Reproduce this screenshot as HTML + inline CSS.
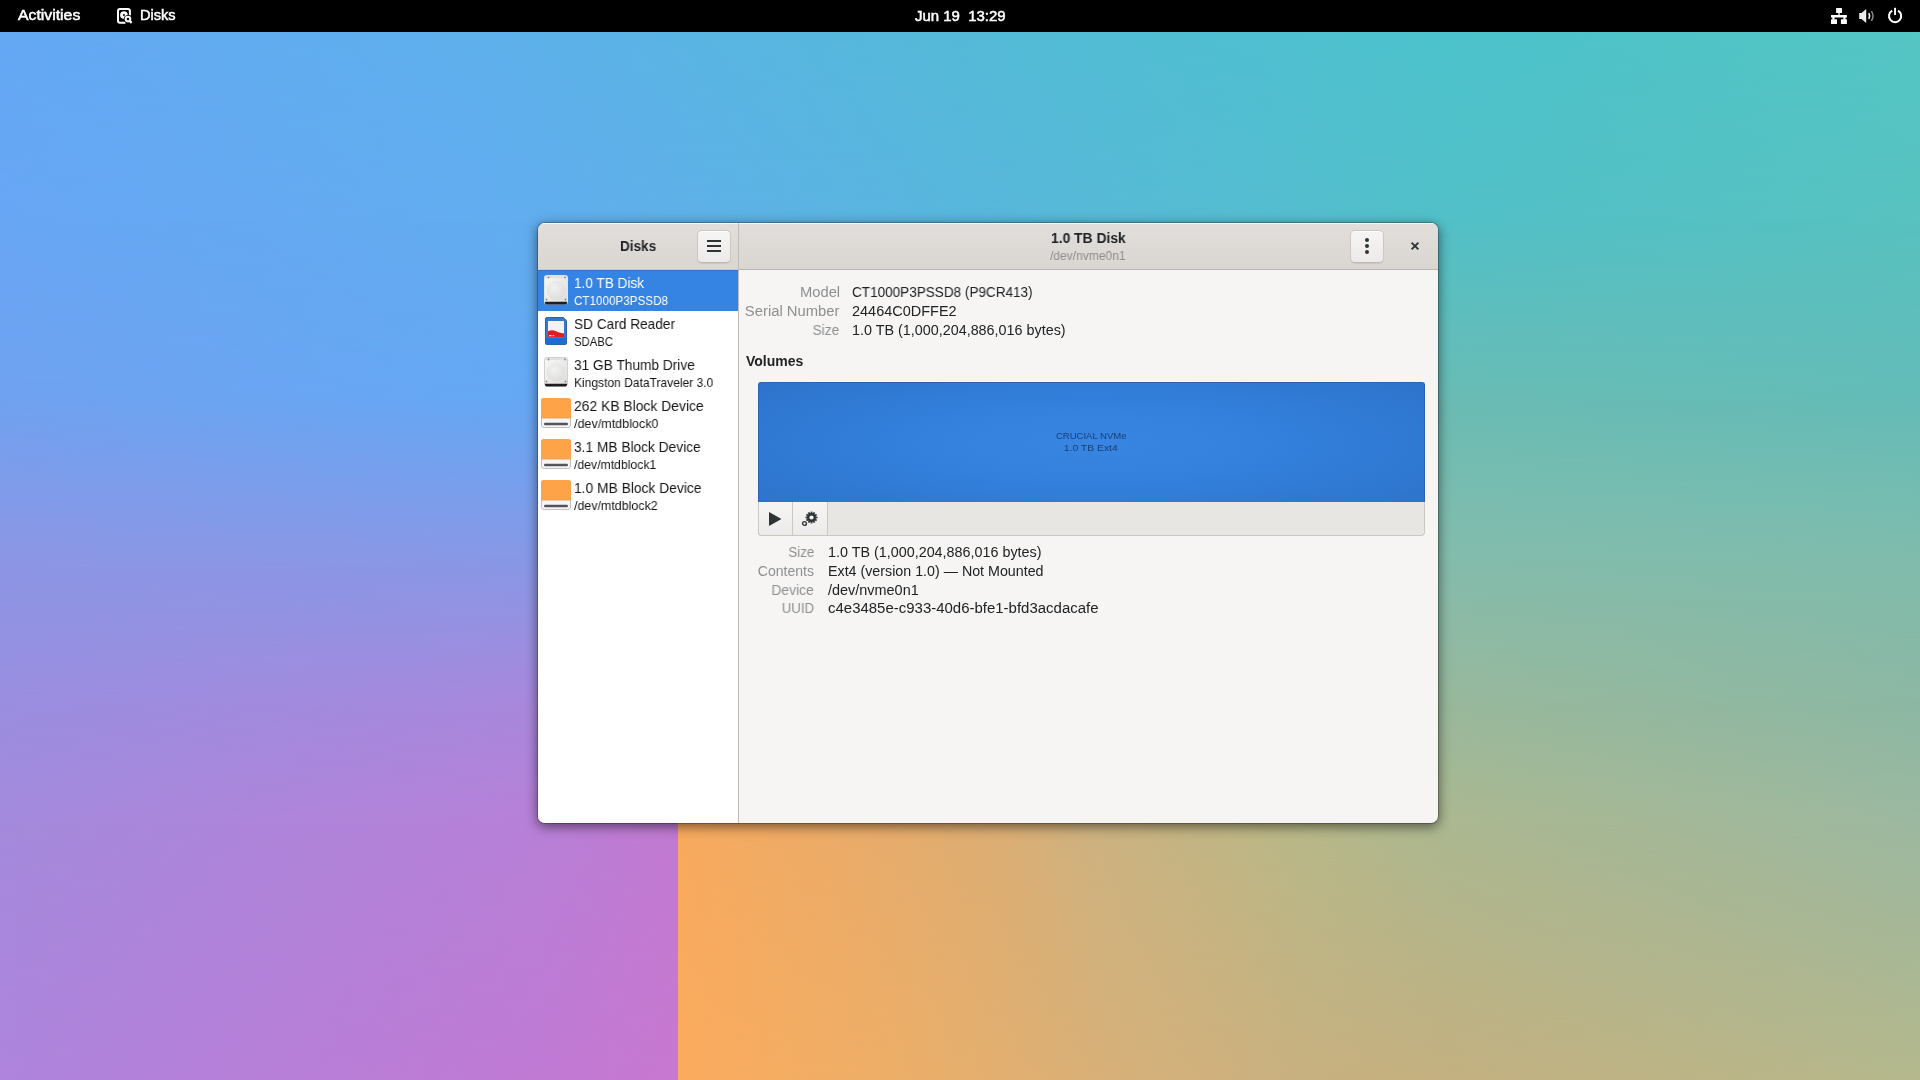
<!DOCTYPE html>
<html><head><meta charset="utf-8"><style>
html,body{margin:0;padding:0}
body{width:1920px;height:1080px;overflow:hidden;position:relative;font-family:"Liberation Sans",sans-serif;color:#2e3436;background:#62a8f2}
.abs{position:absolute}
.t{position:absolute;white-space:nowrap;line-height:1;will-change:transform}
.bgl{position:absolute;left:0;top:0;width:1920px;height:1080px}
#topbar{left:0;top:0;width:1920px;height:32px;background:#000}
#win{left:538px;top:223px;width:900px;height:600px;border-radius:7px 7px 7px 7px;overflow:hidden;background:#f6f5f4;
 box-shadow:0 0 0 1px rgba(0,0,0,0.23),0 3px 12px 1px rgba(0,0,0,0.5)}
.hdr{position:absolute;top:0;height:46px;background:linear-gradient(to top,#dad6d2,#e1dedb);border-bottom:1px solid #b9b5b1;box-shadow:inset 0 1px rgba(255,255,255,0.8)}
.btn{position:absolute;box-sizing:border-box;border:1px solid #cdc7c2;border-bottom-color:#bfb8b1;border-radius:5px;background:linear-gradient(to top,#edebe9 2px,#f6f5f4);box-shadow:inset 0 1px rgba(255,255,255,0.8),0 1px rgba(0,0,0,0.07)}
svg{position:absolute;overflow:visible}
</style></head><body>
<div class="bgl" style="background:linear-gradient(to right,#64a8f4 0px,#5eb0ec 480px,#54bad8 960px,#4cc2cc 1440px,#54c6c4 1920px);"></div>
<div class="bgl" style="background:linear-gradient(to right,#68a6f4 0px,#62acf0 480px,#58b6dc 960px,#52c0c8 1440px,#58c2c0 1920px);-webkit-mask-image:linear-gradient(to bottom,transparent 32px,#000 220px);mask-image:linear-gradient(to bottom,transparent 32px,#000 220px);"></div>
<div class="bgl" style="background:linear-gradient(to right,#70a2f0 0px,#64a8f4 538px,#5eb4d8 960px,#6abcb4 1440px,#64bcb8 1920px);-webkit-mask-image:linear-gradient(to bottom,transparent 220px,#000 400px);mask-image:linear-gradient(to bottom,transparent 220px,#000 400px);"></div>
<div class="bgl" style="background:linear-gradient(to right,#8c96e4 0px,#8898e6 538px,#80b0c0 960px,#84bcac 1440px,#80bcac 1920px);-webkit-mask-image:linear-gradient(to bottom,transparent 400px,#000 560px);mask-image:linear-gradient(to bottom,transparent 400px,#000 560px);"></div>
<div class="bgl" style="background:linear-gradient(to right,#9a8ee0 0px,#a888dc 538px,#a0a8b0 960px,#98b89c 1440px,#8cb8a4 1920px);-webkit-mask-image:linear-gradient(to bottom,transparent 560px,#000 700px);mask-image:linear-gradient(to bottom,transparent 560px,#000 700px);"></div>
<div class="bgl" style="background:linear-gradient(to right,#a48adc 0px,#b880d8 538px,#c27ad2 678px,#c0a890 960px,#acb890 1440px,#9cb8a0 1920px);-webkit-mask-image:linear-gradient(to bottom,transparent 700px,#000 823px);mask-image:linear-gradient(to bottom,transparent 700px,#000 823px);"></div>
<div class="bgl" style="background:linear-gradient(to right,#ae84dc 0px,#c07ad4 538px,#c878d0 678px,#d8b078 960px,#c4b080 1440px,#b4b88c 1920px);-webkit-mask-image:linear-gradient(to bottom,transparent 823px,#000 1080px);mask-image:linear-gradient(to bottom,transparent 823px,#000 1080px);"></div>
<div class="abs" style="left:678px;top:823px;width:1242px;height:257px;background:linear-gradient(to right,#f8aa5e 0px,#eaac6a 182px,#dcae74 322px,#ccb280 422px,#b8b888 622px,#acb890 760px,#9cb8a0 1242px);"></div>
<div class="abs" style="left:678px;top:823px;width:1242px;height:257px;background:linear-gradient(to right,#fbab5d 0px,#ecae68 222px,#d8b078 422px,#c8b080 622px,#c4b080 760px,#b4b88c 1242px);-webkit-mask-image:linear-gradient(to bottom,transparent 0px,#000 257px);mask-image:linear-gradient(to bottom,transparent 0px,#000 257px);"></div>
<div class="abs" id="topbar">
<div class="t" style="left:18.00px;top:8.33px;font-size:14.5px;transform:scaleX(1.0890);transform-origin:0.00px 0;color:#fff;-webkit-text-stroke:0.5px #fff;">Activities</div>
<svg style="left:117px;top:8px" width="17" height="17" viewBox="0 0 17 17">
<path d="M12.9 7.5 V3 A2 2 0 0 0 10.9 1 H3 A2 2 0 0 0 1 3 V12.8 A2 2 0 0 0 3 14.8 H8.5" fill="none" stroke="#fff" stroke-width="2"/>
<circle cx="6.9" cy="7.1" r="2.4" fill="none" stroke="#fff" stroke-width="2.8"/>
<circle cx="11" cy="11.1" r="4.2" fill="#000"/>
<circle cx="11" cy="11.1" r="2.3" fill="none" stroke="#fff" stroke-width="2"/>
<path d="M12.6 12.8 L14.6 14.9" stroke="#fff" stroke-width="2.3"/>
</svg>
<div class="t" style="left:139.80px;top:8.33px;font-size:14.5px;transform:scaleX(1.0044);transform-origin:0.00px 0;color:#fff;-webkit-text-stroke:0.5px #fff;">Disks</div>
<div class="t" style="left:914.70px;top:8.53px;font-size:14.5px;transform:scaleX(1.0310);transform-origin:0.00px 0;color:#fff;-webkit-text-stroke:0.5px #fff;">Jun 19 &nbsp;13:29</div>
<svg style="left:1831px;top:8px" width="16" height="16" viewBox="0 0 16 16" fill="#fff">
<rect x="5.1" y="0" width="5.9" height="5" rx="0.6"/><rect x="7.4" y="4.5" width="1.3" height="3"/>
<rect x="0" y="7" width="15.9" height="2.5"/><rect x="1.3" y="9" width="2.2" height="2.5"/><rect x="12.4" y="9" width="2.2" height="2.5"/>
<rect x="0" y="11.2" width="6" height="4.8" rx="0.6"/><rect x="9.9" y="11.2" width="6" height="4.8" rx="0.6"/>
</svg>
<svg style="left:1858px;top:8px" width="18" height="16" viewBox="0 0 18 16">
<path d="M1.2 5 H3.6 L8.2 1 V15 L3.6 11 H1.2 Z" fill="#eee"/>
<path d="M10.8 5.2 Q12.4 8 10.8 10.8" stroke="#fff" stroke-width="1.6" fill="none"/>
<path d="M13.4 3.2 Q16.6 8 13.4 12.8" stroke="#8a8a8a" stroke-width="1.5" fill="none"/>
</svg>
<svg style="left:1887px;top:7px" width="16" height="17" viewBox="0 0 16 17">
<path d="M5.2 3.7 A6.1 6.1 0 1 0 11.0 3.7" stroke="#fff" stroke-width="2" fill="none"/>
<rect x="7.1" y="0.8" width="1.9" height="7.2" fill="#fff"/>
</svg>
</div>
<div class="abs" id="win">
<div class="hdr" style="left:0;width:200px;border-bottom-color:#c4cedb"></div>
<div class="hdr" style="left:201px;width:699px"></div>
<div class="abs" style="left:0;top:47px;width:200px;height:553px;background:#fff"></div>
<div class="abs" style="left:200px;top:0;width:1px;height:600px;background:#c0bbb6"></div>
<div class="t" style="left:81.70px;top:15.63px;font-size:14.5px;transform:scaleX(0.9330);transform-origin:0.00px 0;font-weight:bold;color:#202224;">Disks</div>
<div class="btn" style="left:159px;top:7px;width:34px;height:33px"></div>
<svg style="left:169px;top:16px" width="14" height="14" viewBox="0 0 14 14" fill="#2e3436">
<rect x="0" y="1" width="14" height="2"/><rect x="0" y="6" width="14" height="2"/><rect x="0" y="11" width="14" height="2"/></svg>
<div class="t" style="left:513.20px;top:8.40px;font-size:14.3px;transform:scaleX(0.9690);transform-origin:0.00px 0;font-weight:bold;color:#202224;">1.0 TB Disk</div>
<div class="t" style="left:512.40px;top:26.00px;font-size:13px;transform:scaleX(0.9258);transform-origin:0.00px 0;color:#8f8d8b;">/dev/nvme0n1</div>
<div class="btn" style="left:812px;top:7px;width:34px;height:33px"></div>
<svg style="left:825px;top:15px" width="8" height="16" viewBox="0 0 8 16" fill="#2e3436">
<circle cx="4" cy="2" r="2"/><circle cx="4" cy="8" r="2"/><circle cx="4" cy="14" r="2"/></svg>
<svg style="left:872px;top:18px" width="10" height="10" viewBox="0 0 10 10">
<path d="M1.6 1.6 L8.4 8.4 M8.4 1.6 L1.6 8.4" stroke="#2e3436" stroke-width="1.9" stroke-linecap="butt"/></svg>
<div class="abs" style="left:0;top:47px;width:200px;height:41px;background:#3584e4;box-shadow:inset 0 1px rgba(0,0,0,0.12)"></div>
<svg style="left:6px;top:52px" width="24" height="30" viewBox="0 0 24 30">
<defs><linearGradient id="dg652" x1="0" y1="0" x2="1" y2="1"><stop offset="0" stop-color="#f8f8f7"/><stop offset="1" stop-color="#dedddb"/></linearGradient>
<radialGradient id="pg652" cx="0.4" cy="0.35" r="0.7"><stop offset="0" stop-color="#f2f2f1"/><stop offset="1" stop-color="#dddcda"/></radialGradient></defs>
<rect x="0.5" y="0.5" width="23" height="28.5" rx="2" fill="url(#dg652)" stroke="#d8e8fb" stroke-width="1"/>
<rect x="1" y="1" width="22" height="2" fill="#e2e1df"/>
<circle cx="12" cy="15.5" r="9.3" fill="url(#pg652)"/>
<path d="M1 26.8 H23 V27.8 A1.7 1.7 0 0 1 21.3 29.5 H2.7 A1.7 1.7 0 0 1 1 27.8 Z" fill="#1e1e22"/>
<circle cx="4.5" cy="2.5" r="0.9" fill="#8a8986"/><circle cx="21" cy="2.5" r="0.9" fill="#8a8986"/>
<circle cx="2.5" cy="24.5" r="0.9" fill="#8a8986"/><circle cx="21.5" cy="24.5" r="0.9" fill="#8a8986"/>
</svg>
<div class="t" style="left:36.00px;top:51.70px;font-size:15px;transform:scaleX(0.9062);transform-origin:0.00px 0;color:#fff;">1.0 TB Disk</div>
<div class="t" style="left:36.00px;top:70.94px;font-size:13.3px;transform:scaleX(0.8769);transform-origin:0.00px 0;color:#fff;">CT1000P3PSSD8</div>
<svg style="left:7px;top:94px" width="22" height="28" viewBox="0 0 22 28">
<path d="M2 0.5 H18.3 L21.5 3.7 V26 A1.5 1.5 0 0 1 20 27.5 H2 A1.5 1.5 0 0 1 0.5 26 V2 A1.5 1.5 0 0 1 2 0.5 Z" fill="#3878cc" stroke="#2a62b0" stroke-width="1"/>
<rect x="3" y="4" width="16" height="16.5" fill="#f6f2f4"/>
<path d="M3 14.2 Q7 12.2 11 14.2 T19 16.4 V20.5 H3 Z" fill="#e01b24"/>
<rect x="4" y="18.2" width="2.6" height="1" fill="#fff"/><rect x="7.6" y="18.2" width="1.6" height="1" fill="#fff"/>
<rect x="1" y="20.5" width="20" height="6.5" fill="#1c6ed6"/>
</svg>
<div class="t" style="left:36.00px;top:92.70px;font-size:15px;transform:scaleX(0.9109);transform-origin:0.00px 0;color:#161616;">SD Card Reader</div>
<div class="t" style="left:36.00px;top:111.94px;font-size:13.3px;transform:scaleX(0.8511);transform-origin:0.00px 0;color:#161616;">SDABC</div>
<svg style="left:6px;top:134px" width="24" height="30" viewBox="0 0 24 30">
<defs><linearGradient id="dg6134" x1="0" y1="0" x2="1" y2="1"><stop offset="0" stop-color="#f8f8f7"/><stop offset="1" stop-color="#dedddb"/></linearGradient>
<radialGradient id="pg6134" cx="0.4" cy="0.35" r="0.7"><stop offset="0" stop-color="#f2f2f1"/><stop offset="1" stop-color="#dddcda"/></radialGradient></defs>
<rect x="0.5" y="0.5" width="23" height="28.5" rx="2" fill="url(#dg6134)" stroke="#d2d1ce" stroke-width="1"/>
<rect x="1" y="1" width="22" height="2" fill="#e2e1df"/>
<circle cx="12" cy="15.5" r="9.3" fill="url(#pg6134)"/>
<path d="M1 26.8 H23 V27.8 A1.7 1.7 0 0 1 21.3 29.5 H2.7 A1.7 1.7 0 0 1 1 27.8 Z" fill="#1e1e22"/>
<circle cx="4.5" cy="2.5" r="0.9" fill="#8a8986"/><circle cx="21" cy="2.5" r="0.9" fill="#8a8986"/>
<circle cx="2.5" cy="24.5" r="0.9" fill="#8a8986"/><circle cx="21.5" cy="24.5" r="0.9" fill="#8a8986"/>
</svg>
<div class="t" style="left:36.00px;top:133.70px;font-size:15px;transform:scaleX(0.9132);transform-origin:0.00px 0;color:#161616;">31 GB Thumb Drive</div>
<div class="t" style="left:36.00px;top:152.94px;font-size:13.3px;transform:scaleX(0.9045);transform-origin:0.00px 0;color:#161616;">Kingston DataTraveler 3.0</div>
<svg style="left:3px;top:175px" width="30" height="30" viewBox="0 0 30 30">
<rect x="0.5" y="0.5" width="29" height="29" rx="2.5" fill="#f6f5f4" stroke="#c0bfbc" stroke-width="1"/>
<path d="M2.5 0 H27.5 A2.5 2.5 0 0 1 30 2.5 V20 H0 V2.5 A2.5 2.5 0 0 1 2.5 0 Z" fill="#ffa348"/>
<rect x="0" y="19.5" width="30" height="1" fill="#e5a45e"/>
<rect x="3" y="24.8" width="24" height="2.4" rx="1.2" fill="#55535b"/>
</svg>
<div class="t" style="left:36.00px;top:174.70px;font-size:15px;transform:scaleX(0.9253);transform-origin:0.00px 0;color:#161616;">262 KB Block Device</div>
<div class="t" style="left:36.00px;top:193.94px;font-size:13.3px;transform:scaleX(0.9447);transform-origin:0.00px 0;color:#161616;">/dev/mtdblock0</div>
<svg style="left:3px;top:216px" width="30" height="30" viewBox="0 0 30 30">
<rect x="0.5" y="0.5" width="29" height="29" rx="2.5" fill="#f6f5f4" stroke="#c0bfbc" stroke-width="1"/>
<path d="M2.5 0 H27.5 A2.5 2.5 0 0 1 30 2.5 V20 H0 V2.5 A2.5 2.5 0 0 1 2.5 0 Z" fill="#ffa348"/>
<rect x="0" y="19.5" width="30" height="1" fill="#e5a45e"/>
<rect x="3" y="24.8" width="24" height="2.4" rx="1.2" fill="#55535b"/>
</svg>
<div class="t" style="left:36.00px;top:215.70px;font-size:15px;transform:scaleX(0.9156);transform-origin:0.00px 0;color:#161616;">3.1 MB Block Device</div>
<div class="t" style="left:36.00px;top:234.94px;font-size:13.3px;transform:scaleX(0.9201);transform-origin:0.00px 0;color:#161616;">/dev/mtdblock1</div>
<svg style="left:3px;top:257px" width="30" height="30" viewBox="0 0 30 30">
<rect x="0.5" y="0.5" width="29" height="29" rx="2.5" fill="#f6f5f4" stroke="#c0bfbc" stroke-width="1"/>
<path d="M2.5 0 H27.5 A2.5 2.5 0 0 1 30 2.5 V20 H0 V2.5 A2.5 2.5 0 0 1 2.5 0 Z" fill="#ffa348"/>
<rect x="0" y="19.5" width="30" height="1" fill="#e5a45e"/>
<rect x="3" y="24.8" width="24" height="2.4" rx="1.2" fill="#55535b"/>
</svg>
<div class="t" style="left:36.00px;top:256.70px;font-size:15px;transform:scaleX(0.9213);transform-origin:0.00px 0;color:#161616;">1.0 MB Block Device</div>
<div class="t" style="left:36.00px;top:275.94px;font-size:13.3px;transform:scaleX(0.9357);transform-origin:0.00px 0;color:#161616;">/dev/mtdblock2</div>
<div class="t" style="left:263.57px;top:61.85px;font-size:14px;transform:scaleX(1.0516);transform-origin:38.13px 0;color:#8d8f90;">Model</div>
<div class="t" style="left:314.40px;top:61.85px;font-size:14px;transform:scaleX(0.9670);transform-origin:0.00px 0;color:#202224;">CT1000P3PSSD8 (P9CR413)</div>
<div class="t" style="left:212.22px;top:80.65px;font-size:14px;transform:scaleX(1.0573);transform-origin:89.48px 0;color:#8d8f90;">Serial Number</div>
<div class="t" style="left:314.40px;top:80.65px;font-size:14px;transform:scaleX(1.0339);transform-origin:0.00px 0;color:#202224;">24464C0DFFE2</div>
<div class="t" style="left:274.47px;top:99.75px;font-size:14px;transform:scaleX(0.9804);transform-origin:27.23px 0;color:#8d8f90;">Size</div>
<div class="t" style="left:314.40px;top:99.75px;font-size:14px;transform:scaleX(1.0253);transform-origin:0.00px 0;color:#202224;">1.0 TB (1,000,204,886,016 bytes)</div>
<div class="t" style="left:207.50px;top:131.15px;font-size:14px;transform:scaleX(0.9963);transform-origin:0.00px 0;font-weight:bold;color:#202224;">Volumes</div>
<div class="abs" style="left:220px;top:159px;width:667px;height:120px;box-sizing:border-box;border:1px solid #2a64b0;border-bottom:none;border-radius:3px 3px 0 0;
background:radial-gradient(ellipse 420px 90px at 333px 60px,#3886e2 0%,#3280dc 45%,#2e74cc 100%)"></div>
<div class="t" style="left:518.11px;top:207.56px;font-size:9.5px;transform:scaleX(1.0031);transform-origin:35.19px 0;color:#183f76;">CRUCIAL NVMe</div>
<div class="t" style="left:528.27px;top:219.56px;font-size:9.5px;transform:scaleX(1.0917);transform-origin:24.73px 0;color:#183f76;">1.0 TB Ext4</div>
<div class="abs" style="left:220px;top:279px;width:667px;height:34px;box-sizing:border-box;border:1px solid #cdc7c2;border-top:none;border-radius:0 0 4px 4px;background:#e8e6e3"></div>
<div class="abs" style="left:220px;top:279px;width:35px;height:34px;box-sizing:border-box;border:1px solid #cdc7c2;border-top:none;border-radius:0 0 0 4px;background:linear-gradient(to top,#edebe9,#f6f5f4)"></div>
<div class="abs" style="left:254px;top:279px;width:36px;height:34px;box-sizing:border-box;border:1px solid #cdc7c2;border-top:none;background:linear-gradient(to top,#edebe9,#f6f5f4)"></div>
<svg style="left:230px;top:288px" width="14" height="16" viewBox="0 0 14 16"><path d="M1 1 L13.5 8 L1 15 Z" fill="#2e3436"/></svg>
<svg style="left:263px;top:286px" width="18" height="20" viewBox="0 0 18 20">
<g transform="translate(10.5,8.5)" fill="#2e3436">
<circle r="4.4"/><rect x="-0.9" y="-5.9" width="1.8" height="2.4" transform="rotate(0)"/><rect x="-0.9" y="-5.9" width="1.8" height="2.4" transform="rotate(30)"/><rect x="-0.9" y="-5.9" width="1.8" height="2.4" transform="rotate(60)"/><rect x="-0.9" y="-5.9" width="1.8" height="2.4" transform="rotate(90)"/><rect x="-0.9" y="-5.9" width="1.8" height="2.4" transform="rotate(120)"/><rect x="-0.9" y="-5.9" width="1.8" height="2.4" transform="rotate(150)"/><rect x="-0.9" y="-5.9" width="1.8" height="2.4" transform="rotate(180)"/><rect x="-0.9" y="-5.9" width="1.8" height="2.4" transform="rotate(210)"/><rect x="-0.9" y="-5.9" width="1.8" height="2.4" transform="rotate(240)"/><rect x="-0.9" y="-5.9" width="1.8" height="2.4" transform="rotate(270)"/><rect x="-0.9" y="-5.9" width="1.8" height="2.4" transform="rotate(300)"/><rect x="-0.9" y="-5.9" width="1.8" height="2.4" transform="rotate(330)"/>
<circle r="2.1" fill="#f3f2f0"/></g>
<circle cx="3.5" cy="14.5" r="1.9" fill="none" stroke="#2e3436" stroke-width="1.4"/>
</svg>
<div class="t" style="left:248.97px;top:321.85px;font-size:14px;transform:scaleX(0.9510);transform-origin:27.23px 0;color:#8d8f90;">Size</div>
<div class="t" style="left:289.50px;top:321.85px;font-size:14px;transform:scaleX(1.0248);transform-origin:0.00px 0;color:#202224;">1.0 TB (1,000,204,886,016 bytes)</div>
<div class="t" style="left:220.17px;top:340.95px;font-size:14px;transform:scaleX(1.0047);transform-origin:56.03px 0;color:#8d8f90;">Contents</div>
<div class="t" style="left:289.50px;top:340.95px;font-size:14px;transform:scaleX(1.0182);transform-origin:0.00px 0;color:#202224;">Ext4 (version 1.0) — Not Mounted</div>
<div class="t" style="left:233.41px;top:359.75px;font-size:14px;transform:scaleX(0.9908);transform-origin:42.79px 0;color:#8d8f90;">Device</div>
<div class="t" style="left:289.50px;top:359.75px;font-size:14px;transform:scaleX(1.0313);transform-origin:0.00px 0;color:#202224;">/dev/nvme0n1</div>
<div class="t" style="left:241.98px;top:378.45px;font-size:14px;transform:scaleX(0.9497);transform-origin:34.22px 0;color:#8d8f90;">UUID</div>
<div class="t" style="left:289.50px;top:378.45px;font-size:14px;transform:scaleX(1.0693);transform-origin:0.00px 0;color:#202224;">c4e3485e-c933-40d6-bfe1-bfd3acdacafe</div>
</div>
</body></html>
